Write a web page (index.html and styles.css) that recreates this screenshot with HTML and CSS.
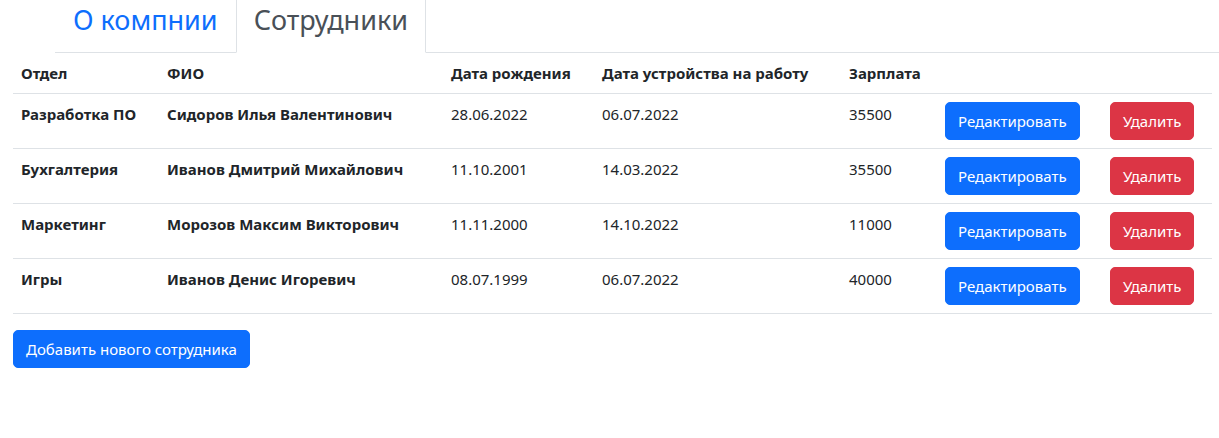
FILE: index.html
```html
<!DOCTYPE html>
<html lang="ru">
<head>
<meta charset="utf-8">
<title>Сотрудники</title>
<link rel="stylesheet" href="styles.css">
</head>
<body>
<ul class="tabs">
  <li><a class="tab-link" href="#">О компнии</a></li>
  <li><a class="tab-link active" href="#">Сотрудники</a></li>
</ul>
<div class="content">
  <table class="staff">
    <colgroup>
      <col class="c1"><col class="c2"><col class="c3"><col class="c4"><col class="c5"><col class="c6"><col class="c7">
    </colgroup>
    <thead>
      <tr><th>Отдел</th><th>ФИО</th><th>Дата рождения</th><th>Дата устройства на работу</th><th>Зарплата</th><th></th><th></th></tr>
    </thead>
    <tbody>
      <tr><th>Разработка ПО</th><th>Сидоров Илья Валентинович</th><td>28.06.2022</td><td>06.07.2022</td><td>35500</td><td><button class="btn btn-blue">Редактировать</button></td><td><button class="btn btn-red">Удалить</button></td></tr>
      <tr><th>Бухгалтерия</th><th>Иванов Дмитрий Михайлович</th><td>11.10.2001</td><td>14.03.2022</td><td>35500</td><td><button class="btn btn-blue">Редактировать</button></td><td><button class="btn btn-red">Удалить</button></td></tr>
      <tr><th>Маркетинг</th><th>Морозов Максим Викторович</th><td>11.11.2000</td><td>14.10.2022</td><td>11000</td><td><button class="btn btn-blue">Редактировать</button></td><td><button class="btn btn-red">Удалить</button></td></tr>
      <tr><th>Игры</th><th>Иванов Денис Игоревич</th><td>08.07.1999</td><td>06.07.2022</td><td>40000</td><td><button class="btn btn-blue">Редактировать</button></td><td><button class="btn btn-red">Удалить</button></td></tr>
    </tbody>
  </table>
  <button class="btn btn-blue add">Добавить нового сотрудника</button>
</div>
</body>
</html>
```
FILE: styles.css
```css
* { box-sizing: border-box; }
html, body { margin: 0; padding: 0; background: #fff; }
body {
  font-family: "Noto Sans", "Open Sans", sans-serif;
  color: #212529;
  font-size: 15px;
}
.tabs {
  list-style: none;
  margin: -1px 0 0 55px;
  padding: 0;
  display: flex;
  border-bottom: 1px solid #dee2e6;
}
.tabs li { margin-bottom: -1px; }
.tab-link {
  display: block;
  padding: 2px 17px 14px;
  font-size: 27px;
  line-height: 36px;
  color: #0d6efd;
  text-decoration: none;
  border: 1px solid transparent;
}
.tab-link.active {
  color: #495057;
  background: #fff;
  border-color: #dee2e6 #dee2e6 #fff;
}
.content { padding: 0 7px 0 13px; }
.staff {
  width: 100%;
  border-collapse: collapse;
  table-layout: fixed;
  margin-bottom: 16px;
}
.c1 { width: 146px; } .c2 { width: 284px; } .c3 { width: 151px; } .c4 { width: 247px; }
.c5 { width: 96px; } .c6 { width: 165px; } .c7 { width: 110px; }
.staff th, .staff td {
  text-align: left;
  vertical-align: top;
  padding: 8px;
  line-height: 24px;
  border-bottom: 1px solid #dee2e6;
  white-space: nowrap;
}
.staff thead th { vertical-align: bottom; }
.staff th { font-weight: 700; }
.staff td { font-weight: 400; }
.btn {
  font-family: inherit;
  font-size: 15px;
  line-height: 24px;
  padding: 6px 12px;
  border: 1px solid transparent;
  border-radius: 5px;
  color: #fff;
  cursor: pointer;
}
.btn-blue { background: #0d6efd; border-color: #0d6efd; }
.btn-red { background: #dc3545; border-color: #dc3545; }
.add { display: block; }
```
